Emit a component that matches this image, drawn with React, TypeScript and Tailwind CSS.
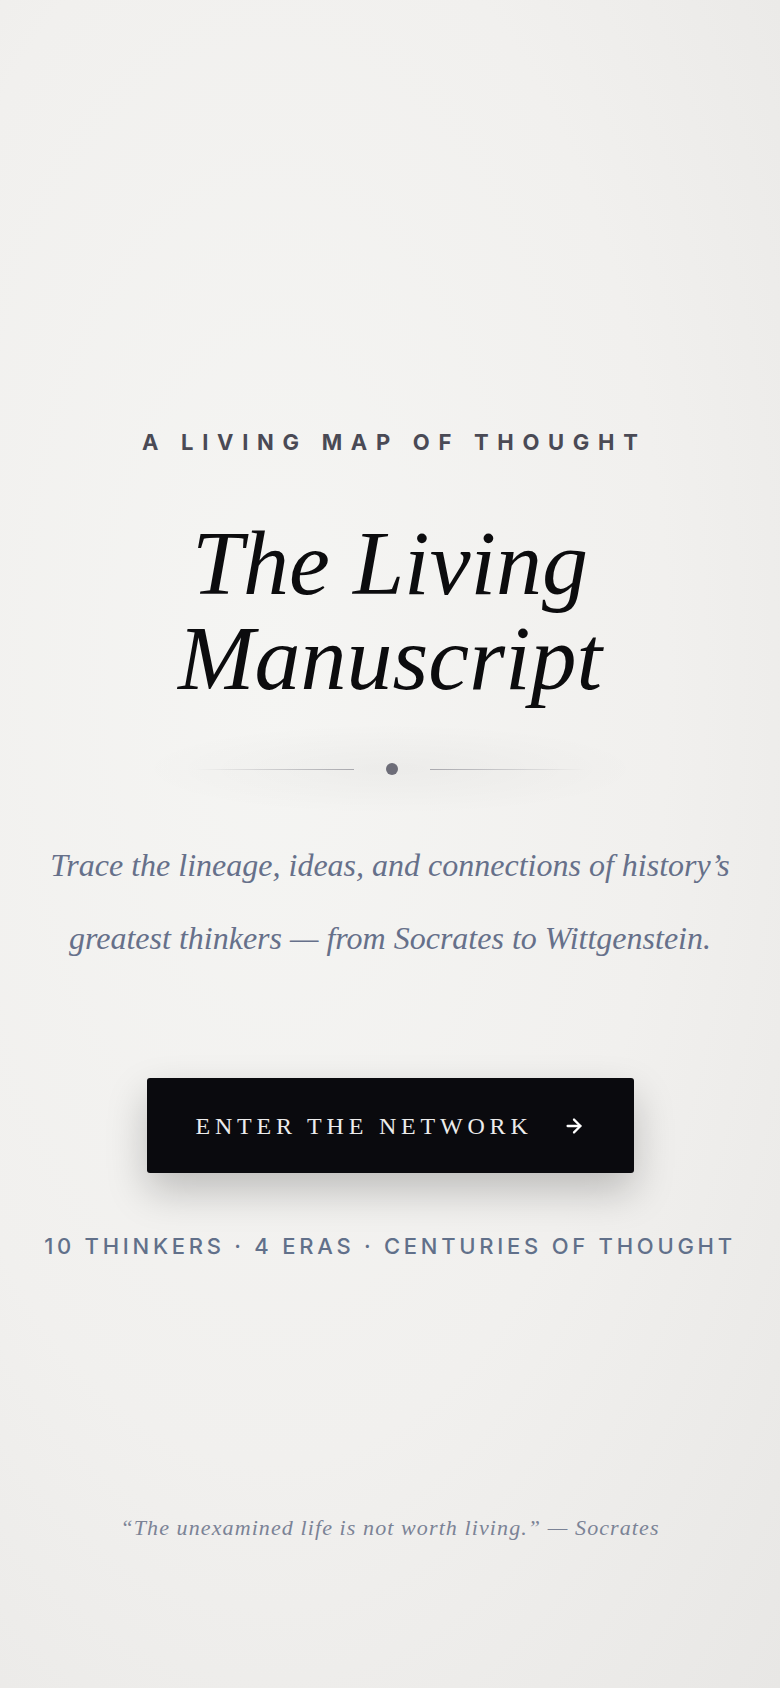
import { ArrowRight } from "lucide-react";

const serif = "font-['Liberation_Serif','Times_New_Roman',serif]";
const sans = "font-['Inter','Liberation_Sans',sans-serif]";

const Divider = () => (
	<div className="flex items-center justify-center gap-[32px]">
		<span className="h-px w-[158px] bg-gradient-to-r from-transparent to-[#a9a9ae]" />
		<span className="h-[12px] w-[12px] rounded-full bg-[#6d6d78]" />
		<span className="h-px w-[155px] bg-gradient-to-l from-transparent to-[#a9a9ae]" />
	</div>
);

export default function App() {
	return (
		<div className="min-h-[1688px] w-full bg-[radial-gradient(ellipse_at_35%_40%,#f5f5f3_0%,#f1f0ee_55%,#e8e7e5_100%)]">
			<main className="flex flex-col items-center pt-[431px] text-center">
				{/* Eyebrow */}
				<p className={`${sans} text-[22px] leading-none font-bold tracking-[0.395em] text-[#4a4a55] pl-[0.395em]`}>
					A LIVING MAP OF THOUGHT
				</p>

				{/* Title */}
				<h1 className={`${serif} mt-[63px] text-[92px] leading-[95px] italic text-[#0c0c0e]`}>
					The Living
					<br />
					Manuscript
				</h1>

				{/* soft glow behind the divider */}
				<div className="mt-[17px] px-[60px] py-[40px] bg-[radial-gradient(ellipse_at_center,rgba(0,0,0,0.03)_0%,transparent_70%)]">
					<Divider />
				</div>

				{/* Intro */}
				<p className={`${serif} mt-[14px] text-[32px] leading-[73px] italic text-[#66708a]`}>
					Trace the lineage, ideas, and connections of history’s
					<br />
					greatest thinkers — from Socrates to Wittgenstein.
				</p>

				{/* CTA */}
				<button
					type="button"
					className="mt-[103px] flex h-[95px] w-[487px] items-center justify-center gap-[30px] rounded-[3px] bg-[#0a0a0e] shadow-[0_18px_40px_rgba(0,0,0,0.22)]"
				>
					<span className={`${serif} text-[24px] leading-none tracking-[0.2em] text-[#ececec]`}>
						ENTER THE NETWORK
					</span>
					<ArrowRight size={22} strokeWidth={2.5} className="text-white" />
				</button>

				{/* Stats */}
				<p className={`${sans} mt-[62px] text-[22px] leading-none font-medium tracking-[0.17em] text-[#61708a]`}>
					10 THINKERS · 4 ERAS · CENTURIES OF THOUGHT
				</p>

				{/* Quote */}
				<p className={`${serif} mt-[260px] text-[22px] leading-none italic tracking-[0.05em] text-[#7b8396]`}>
					“The unexamined life is not worth living.” — Socrates
				</p>
			</main>
		</div>
	);
}
